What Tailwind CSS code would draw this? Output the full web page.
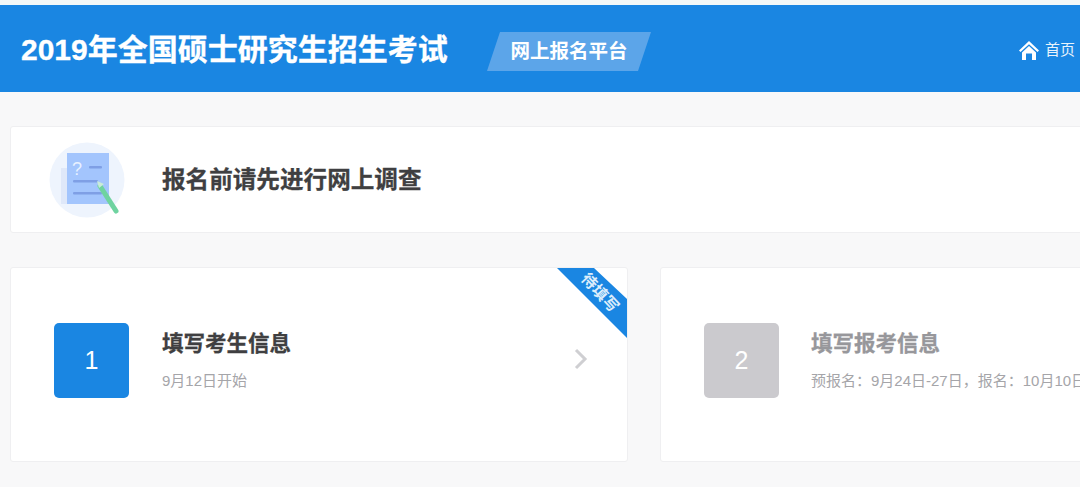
<!DOCTYPE html>
<html lang="zh">
<head>
<meta charset="utf-8">
<script src="https://cdn.jsdelivr.net/npm/@tailwindcss/browser@4"></script>
<title>报名</title>
</head>
<body class="m-0 h-[487px] w-[1080px] overflow-hidden bg-[#f8f8f9] font-['Liberation_Sans','Noto_Sans_CJK_SC',sans-serif]">
  <div class="h-[5px] bg-[#f3f8f8]"></div>
  <header class="flex h-[87px] items-center bg-[#1a86e2] pt-[2px] pl-[21px] text-white">
    <h1 class="w-[466px] shrink-0 text-[30px] font-bold leading-none whitespace-nowrap [-webkit-text-stroke:0.3px_#fff]">2019年全国硕士研究生招生考试</h1>
    <div class="mt-[4px] flex h-[39px] w-[164px] shrink-0 items-center justify-center bg-[#5ca5e9] text-[19.5px] font-bold [clip-path:polygon(13px_0,100%_0,151px_100%,0_100%)]">网上报名平台</div>
    <nav class="mt-[2px] ml-auto flex items-center gap-[6px] pr-[5px] text-[15px] text-[#e8f3fc]">
      <svg class="h-[19px] w-[20px]" viewBox="0 0 20 19" fill="#fff"><path d="M10 0 L0 9.5 L1.5 11 L10 3.2 L18.5 11 L20 9.5 Z"/><path fill-rule="evenodd" d="M10 5 L3 11.5 V19 H7 V12.5 H13 V19 H17 V11.5 Z"/></svg>
      <span>首页</span>
    </nav>
  </header>

  <main class="flex flex-col gap-[34px] pt-[34px] pl-[10px]">
    <section class="flex h-[107px] w-[1100px] items-center rounded-[3px] border border-[#efeff1] bg-white">
      <svg class="ml-[38px] h-[76px] w-[76px] shrink-0" viewBox="0 0 76 76">
        <circle cx="38" cy="38" r="37.5" fill="#eef4fd"/>
        <rect x="12" y="26" width="8" height="36" fill="#dfe8f9"/>
        <rect x="18" y="11" width="42" height="51" fill="#a3c5fd"/>
        <text x="23" y="33" font-size="18" fill="#e8f1ff" font-family="Liberation Sans">?</text>
        <rect x="40" y="24" width="13" height="2.5" rx="1" fill="#7f9fe5"/>
        <rect x="24" y="38" width="25" height="2.5" rx="1" fill="#7f9fe5"/>
        <rect x="24" y="50" width="29" height="2.5" rx="1" fill="#7f9fe5"/>
        <path d="M51 44 L67 69" stroke="#6fd3a0" stroke-width="5" stroke-linecap="round"/>
        <path d="M48 39 L55 42 L50 46 Z" fill="#c9ecd9"/>
      </svg>
      <h2 class="mt-[2px] ml-[37px] text-[23.6px] leading-none font-bold whitespace-nowrap text-[#3f3f41] [-webkit-text-stroke:0.3px_#3f3f41]">报名前请先进行网上调查</h2>
    </section>

    <section class="flex gap-[32px]">
      <article class="relative flex h-[195px] w-[618px] shrink-0 overflow-hidden rounded-[3px] border border-[#efeff1] bg-white pt-[55px] pl-[43px]">
        <div class="flex h-[75px] w-[75px] shrink-0 items-center justify-center rounded-[5px] bg-[#1a86e2] text-[25px] text-white">1</div>
        <div class="ml-[33px]">
          <h3 class="mt-[11px] text-[21.5px] leading-none font-bold whitespace-nowrap text-[#3f3f41] [-webkit-text-stroke:0.3px_#3f3f41]">填写考生信息</h3>
          <p class="mt-[17px] text-[15px] leading-none whitespace-nowrap text-[#a5a5a9]">9月12日开始</p>
        </div>
        <svg class="absolute top-[80px] left-[562px] h-[22px] w-[15px]" viewBox="0 0 15 22" fill="none" stroke="#cfcfd2" stroke-width="3"><path d="M3 2 L12 11 L3 20"/></svg>
        <div class="absolute top-0 right-0 h-[70px] w-[70px] bg-[#1a86e2] [clip-path:polygon(0_0,37px_0,100%_31px,100%_100%)]"></div>
        <span class="absolute top-[17px] right-[-5px] w-[64px] rotate-[47deg] text-center text-[15.5px] leading-none font-bold text-[#dcedfb]">待填写</span>
      </article>

      <article class="flex h-[195px] w-[617px] shrink-0 rounded-[3px] border border-[#efeff1] bg-white pt-[55px] pl-[43px]">
        <div class="flex h-[75px] w-[75px] shrink-0 items-center justify-center rounded-[5px] bg-[#cbcace] text-[25px] text-white">2</div>
        <div class="ml-[32px]">
          <h3 class="mt-[11px] text-[21.5px] leading-none font-bold whitespace-nowrap text-[#97979b] [-webkit-text-stroke:0.3px_#97979b]">填写报考信息</h3>
          <p class="mt-[17px] text-[15px] leading-none whitespace-nowrap text-[#a5a5a9]">预报名：9月24日-27日，报名：10月10日</p>
        </div>
      </article>
    </section>
  </main>
</body>
</html>
